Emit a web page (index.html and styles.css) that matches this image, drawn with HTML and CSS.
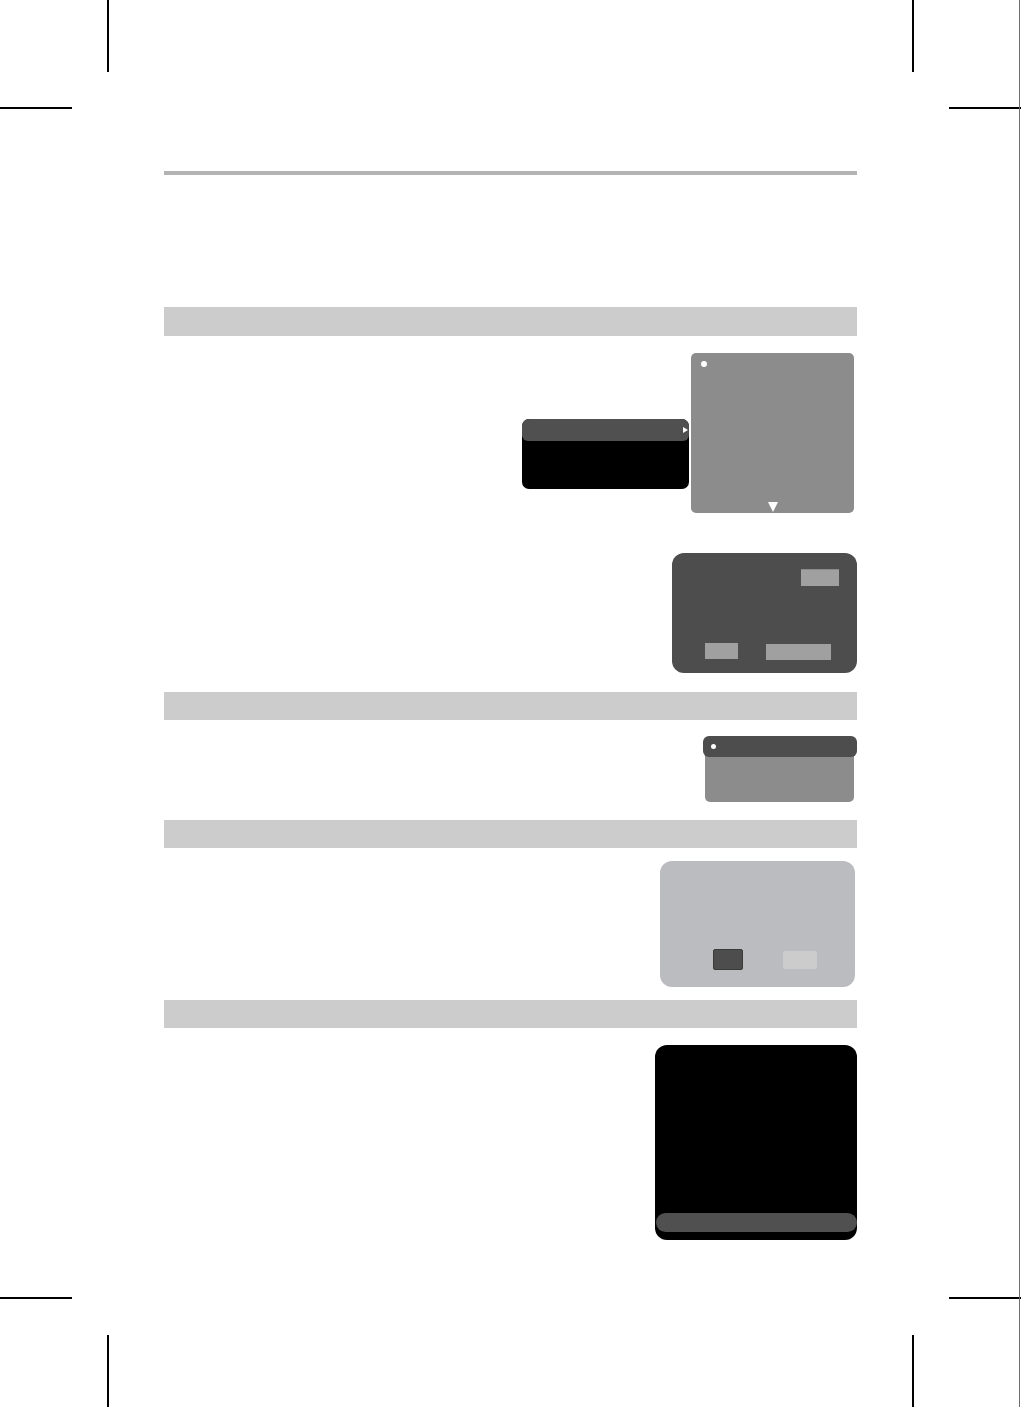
FILE: index.html
```html
<!DOCTYPE html>
<html lang="en">
<head>
    <meta charset="UTF-8">
    <title>Menu Screens</title>
    <link rel="stylesheet" href="styles.css">
</head>
<body>
    <!-- trim marks at the four corners -->
    <div class="mark v tl"></div><div class="mark h tl"></div>
    <div class="mark v tr"></div><div class="mark h tr"></div>
    <div class="mark v bl"></div><div class="mark h bl"></div>
    <div class="mark v br"></div><div class="mark h br"></div>
    <div class="edge"></div>

    <div class="page">
        <div class="rule"></div>

        <div class="section-bar first"></div>
        <div class="section-body one">
            <div class="figure">
                <div class="menu-box">
                    <div class="menu-head"><span class="arrow-right"></span></div>
                </div>
                <div class="list-box">
                    <span class="dot"></span>
                    <span class="arrow-down"></span>
                </div>
            </div>
            <div class="figure">
                <div class="dialog-dark">
                    <div class="dialog-top"><span class="chip small"></span></div>
                    <div class="dialog-bottom">
                        <span class="chip left"></span>
                        <span class="chip wide"></span>
                    </div>
                </div>
            </div>
        </div>

        <div class="section-bar"></div>
        <div class="section-body two">
            <div class="figure">
                <div class="tab-box">
                    <div class="tab-head"><span class="dot"></span></div>
                    <div class="tab-body"></div>
                </div>
            </div>
        </div>

        <div class="section-bar"></div>
        <div class="section-body three">
            <div class="figure">
                <div class="dialog-light">
                    <span class="btn dark"></span>
                    <span class="btn light"></span>
                </div>
            </div>
        </div>

        <div class="section-bar"></div>
        <div class="section-body four">
            <div class="figure">
                <div class="screen">
                    <div class="screen-bar"></div>
                </div>
            </div>
        </div>
    </div>
</body>
</html>
```

FILE: styles.css
```css
html, body {
    margin: 0;
    padding: 0;
    background: #ffffff;
    font-family: "Liberation Sans", Arial, sans-serif;
}

body {
    position: relative;
    width: 1021px;
    height: 1407px;
    overflow: hidden;
}

/* corner trim marks */
.mark {
    position: absolute;
    background: #000000;
}

.mark.v {
    width: 2px;
    height: 72px;
}

.mark.h {
    width: 72px;
    height: 2px;
}

.mark.v.tl, .mark.v.bl { left: 107px; }
.mark.v.tr, .mark.v.br { left: 912px; }
.mark.v.tl, .mark.v.tr { top: 0; }
.mark.v.bl, .mark.v.br { top: 1335px; }

.mark.h.tl, .mark.h.bl { left: 0; }
.mark.h.tr, .mark.h.br { left: 949px; }
.mark.h.tl, .mark.h.tr { top: 107px; }
.mark.h.bl, .mark.h.br { top: 1297px; }

/* sheet edge on the right */
.edge {
    position: absolute;
    top: 0;
    right: 1px;
    width: 1px;
    height: 100%;
    background: #6e6e6e;
}

.page {
    width: 693px;
    margin-left: 164px;
    padding-top: 171px;
}

.rule {
    height: 4px;
    background: #b3b3b3;
}

.section-bar {
    height: 28px;
    background: #cccccc;
}

.section-bar.first {
    margin-top: 132px;
    height: 29px;
}

.section-body {
    display: flex;
    flex-direction: column;
    align-items: flex-end;
}

.section-body.one { padding: 17px 0 19px; gap: 40px; }
.section-body.two { padding: 16px 0 18px; }
.section-body.three { padding: 13px 0 13px; }
.section-body.four { padding: 17px 0 0; }

.figure {
    display: flex;
    align-items: flex-start;
}

/* dropdown menu with its sub list */
.menu-box {
    width: 167px;
    height: 70px;
    margin-top: 66px;
    margin-right: 2px;
    background: #000000;
    border-radius: 7px;
    overflow: hidden;
}

.menu-head {
    height: 22px;
    background: #505050;
    border-radius: 7px 7px 6px 6px;
    display: flex;
    align-items: center;
    justify-content: flex-end;
    padding-right: 1px;
}

.arrow-right {
    width: 0;
    height: 0;
    border-top: 3px solid transparent;
    border-bottom: 3px solid transparent;
    border-left: 5px solid #ffffff;
}

.list-box {
    width: 163px;
    height: 160px;
    margin-right: 3px;
    background: #8c8c8c;
    border-radius: 5px;
    display: flex;
    flex-direction: column;
    justify-content: space-between;
    align-items: center;
    padding: 8px 0 1px;
    box-sizing: border-box;
}

.list-box .dot {
    align-self: flex-start;
    margin-left: 10px;
}

.dot {
    width: 6px;
    height: 6px;
    border-radius: 50%;
    background: #ffffff;
}

.arrow-down {
    width: 0;
    height: 0;
    border-left: 5px solid transparent;
    border-right: 5px solid transparent;
    border-top: 10px solid #ffffff;
}

/* dark confirmation dialog */
.dialog-dark {
    width: 185px;
    height: 120px;
    background: #4d4d4d;
    border-radius: 12px;
    display: flex;
    flex-direction: column;
    justify-content: space-between;
    padding: 16px 0 13px;
    box-sizing: border-box;
}

.dialog-top {
    display: flex;
    justify-content: flex-end;
    padding-right: 18px;
}

.dialog-bottom {
    display: flex;
    padding-left: 33px;
    gap: 28px;
    align-items: flex-start;
}

.chip {
    display: block;
    background: #a0a0a0;
}

.chip.small { width: 38px; height: 16px; border-top: 1px solid #8a8a8a; }
.chip.left { width: 33px; height: 16px; }
.chip.wide { width: 65px; height: 16px; margin-top: 1px; }

/* tabbed panel */
.tab-box {
    width: 154px;
    height: 66px;
    display: flex;
    flex-direction: column;
}

.tab-head {
    height: 21px;
    background: #4d4d4d;
    border-radius: 6px;
    display: flex;
    align-items: center;
    padding-left: 8px;
    position: relative;
    z-index: 1;
}

.tab-head .dot {
    width: 5px;
    height: 5px;
}

.tab-body {
    flex: 1;
    margin: -4px 3px 0 2px;
    background: #8c8c8c;
    border-radius: 0 0 5px 5px;
}

/* light dialog with two buttons */
.dialog-light {
    width: 195px;
    height: 126px;
    margin-right: 2px;
    background: #bbbcbf;
    border-radius: 12px;
    display: flex;
    align-items: flex-end;
    padding: 0 0 17px 53px;
    box-sizing: border-box;
    gap: 40px;
}

.btn {
    display: block;
    height: 19px;
    border-radius: 2px;
}

.btn.dark {
    width: 28px;
    background: #4d4d4d;
    border: 1px solid #3a3a3a;
}

.btn.light {
    width: 34px;
    height: 18px;
    margin-bottom: 1px;
    background: #cccccc;
}

/* black screen with status bar */
.screen {
    width: 202px;
    height: 195px;
    background: #000000;
    border-radius: 12px;
    display: flex;
    align-items: flex-end;
    padding: 0 0 8px 1px;
    box-sizing: border-box;
}

.screen-bar {
    flex: 1;
    height: 19px;
    background: #505050;
    border-radius: 10px;
}
```
